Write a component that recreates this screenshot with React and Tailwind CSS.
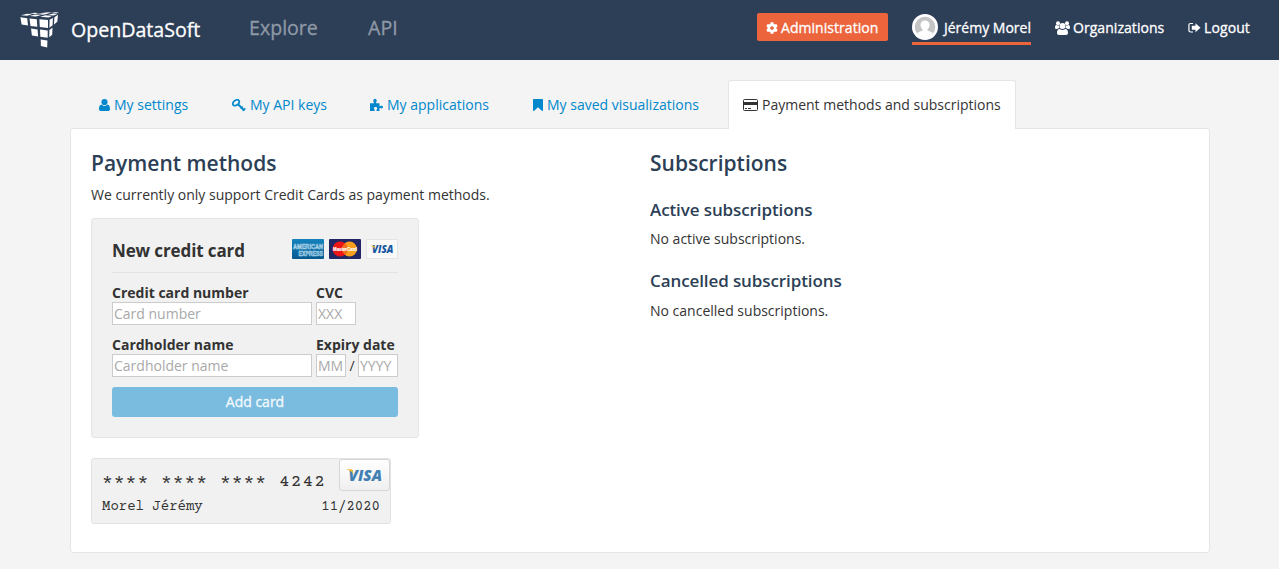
import React from "react";
import { FaCog } from "react-icons/fa";

function Logo() {
  return (
    <svg className="mt-3 h-9 w-10 shrink-0" viewBox="0 0 40 36" fill="#fff">
      <path d="M1 3.2 7 1.8l5 .5-5 1.5zM9.500 4l5.500-1.600 6 .6-5 1.600zM20 4.700l5.500-1.500 6.500.8-3.500 1.400zM9 1.600l6-.9 4 .5-4 .8zM17.500 2.100l6-1 4.500.6-5 1.100zM28 2.900l5-1.500 5 .3-4.500 1.900zM22 .900l6-.6 3.500.5-4 .6zM31 .9l4-.7h4l-2.500.9z" />
      <path d="M.4 5.300l6.800.9.8 7.200-6.400-1zM9.500 6.500l7.300.7.500 7.500-6.800-.8zM19.400 7.200l8.600.8v7.900l-8.200-.8z" />
      <path d="M29.600 7.800l3.300-1.700-.3 7.100-3.200 2.600zM34.400 5.300l3.600-2.600-.7 7.100-3.300 2.600z" />
      <path d="M11 16.600l6.600.8.500 7-6.200-1zM20 17.600l7.700.8v7.400l-7.400-1zM29.400 18l3.100-2.200-.3 6.900-3 2.600z" />
      <path d="M20.700 27.600l6.700.8-.2 7-6.300-1.300z" />
    </svg>
  );
}

function Avatar() {
  return (
    <svg className="h-[26px] w-[26px] shrink-0" viewBox="0 0 26 26">
      <circle cx="13" cy="13" r="13" fill="#fff" />
      <circle cx="13" cy="13" r="10.300" fill="#c4c4c4" />
      <path d="M13 6.500c3 0 4.500 2 4.500 4.400 0 2-.9 3.400-2 4.300v1.200l4.200 1.900c.7.400.9 1.200.9 1.800a10.300 10.300 0 0 1-15.200 0c0-.6.200-1.400.9-1.800l4.200-1.900v-1.200c-1.100-.9-2-2.300-2-4.300 0-2.400 1.500-4.400 4.500-4.400z" fill="#fff" />
    </svg>
  );
}

function GroupIcon() {
  return (
    <svg className="h-[14px] w-[15px]" viewBox="0 0 15 14" fill="currentColor">
      <circle cx="3" cy="2.200" r="2" />
      <circle cx="12" cy="2.200" r="2" />
      <circle cx="7.500" cy="5" r="3" />
      <path d="M4 5a3.500 3.500 0 0 0 .6 2c-1 0-1.800.4-2.300 1H1.500C.6 8 0 7.600 0 6.700 0 5.500.3 4 1.300 4c.3 0 .8.600 1.700.600.400 0 .7-.1 1-.2zM11 5a3.500 3.500 0 0 1-.6 2c1 0 1.800.4 2.300 1h.8c.9 0 1.500-.4 1.500-1.300C15 5.500 14.700 4 13.700 4c-.3 0-.8.600-1.700.600-.4 0-.7-.1-1-.2z" />
      <path d="M4.600 8c.5 0 1.300 1 2.900 1s2.400-1 2.900-1C12.300 8 13 10.200 13 12c0 1.200-.8 2-2 2H4c-1.200 0-2-.8-2-2 0-1.800.7-4 2.600-4z" />
    </svg>
  );
}

function LogoutIcon() {
  return (
    <svg className="h-3 w-[13px]" viewBox="0 0 13 12">
      <path d="M5 1.500H2.600C1.500 1.500.9 2.100.9 3.200v5.100c0 1.100.6 1.700 1.700 1.700H5" fill="none" stroke="currentColor" strokeWidth="1.200" />
      <path d="M7.500 1.300 12.500 5.800l-5 4.500V7.800H3.800v-4h3.700z" fill="currentColor" />
    </svg>
  );
}

function UserIcon() {
  return (
    <svg className="mr-1 h-3 w-[11px]" viewBox="0 0 11 12" fill="currentColor">
      <circle cx="5.500" cy="3.100" r="3.100" />
      <path d="M2.600 5.500C3.300 6.400 4.300 7 5.500 7s2.200-.6 2.900-1.500C10.300 5.600 11 7.700 11 9.700c0 1.400-.8 2.300-2 2.300H2c-1.200 0-2-.9-2-2.300 0-2 .7-4.100 2.600-4.200z" />
    </svg>
  );
}

function BookmarkIcon() {
  return (
    <svg className="mr-1 h-3 w-[10px]" viewBox="0 0 10 12" fill="currentColor">
      <path d="M.8 0h8.400c.5 0 .8.400.8.800v10.400c0 .7-.7 1-1.200.6L5 8.200l-3.800 3.600c-.5.400-1.200.1-1.200-.6V.8C0 .4.300 0 .8 0z" />
    </svg>
  );
}

function KeyIcon() {
  return (
    <svg className="h-[13px] w-[14px]" viewBox="0 0 14 13" fill="none" stroke="currentColor">
      <path d="M1 5.700C.4 4.400 1.300 2.800 2.700 1.700 4.200.7 6 .5 6.800 1.500s.4 2.700-1 3.900C4.300 6.800 1.900 7.200 1 5.700z" strokeWidth="1.700" />
      <path d="M5.800 5l6.500 6.500" strokeWidth="1.900" />
      <path d="M8.600 9.500l2-2M10.900 11.800l2.400-2.400" strokeWidth="1.600" />
    </svg>
  );
}

function PuzzleIcon() {
  return (
    <svg className="mb-0.5 h-[13px] w-[13px]" viewBox="0 0 13 13" fill="currentColor">
      <path d="M0 5.200h3.500c.6 0 .5-.5.200-1C2.900 3 3.200.7 5 .7s2.100 2.300 1.300 3.500c-.4.600-.2 1 .4 1h2.800v2.600c0 .6.500.6 1 .3 1-.7 2.500-.3 2.500 1s-1.500 1.700-2.500 1c-.5-.4-1-.2-1 .3V13H6.500v-1c0-.6.700-.9.700-1.800 0-.8-.7-1.300-1.600-1.300S4 9.400 4 10.200c0 .8.600 1.100.6 1.800v1H0z" />
    </svg>
  );
}

function CardIcon() {
  return (
    <svg className="h-3 w-[15px]" viewBox="0 0 15 12">
      <rect x=".5" y=".5" width="14" height="11" rx="1" fill="none" stroke="currentColor" />
      <path d="M1 3h13v3H1zM2 9h2v1H2zM5 9h3v1H5z" fill="currentColor" />
    </svg>
  );
}

function Amex() {
  return (
    <svg className="h-5 w-8" viewBox="0 0 32 20" overflow="visible">
      <defs>
        <linearGradient id="amex" x1="0" y1="0" x2="0" y2="1">
          <stop offset="0" stopColor="#1583bd" />
          <stop offset="1" stopColor="#04598f" />
        </linearGradient>
      </defs>
      <rect width="32" height="20" rx="1" fill="url(#amex)" />
      <g fill="#3288bb" stroke="#b5d9ec" strokeWidth=".55" fontFamily="Liberation Sans, sans-serif" fontWeight="bold" fontSize="6.500">
        <text x="1" y="9.500" textLength="30" lengthAdjust="spacingAndGlyphs">AMERICAN</text>
        <text x="6.500" y="16.500" textLength="24.500" lengthAdjust="spacingAndGlyphs">EXPRESS</text>
      </g>
    </svg>
  );
}

function MasterCard() {
  return (
    <svg className="h-5 w-8" viewBox="0 0 32 20" overflow="visible">
      <rect width="32" height="20" rx="1" fill="#202764" />
      <circle cx="20.500" cy="10" r="7.500" fill="#fa9f1c" />
      <circle cx="11" cy="10" r="7.500" fill="#ed1515" />
      <path d="M15.750 4.200a7.500 7.500 0 0 1 0 11.600 7.500 7.500 0 0 1 0-11.600z" fill="#f2701d" />
      <text x="4" y="12" fill="#fff" stroke="#fff" strokeWidth=".2" fontFamily="Liberation Sans, sans-serif" fontWeight="bold" fontSize="5.500" textLength="24" lengthAdjust="spacingAndGlyphs">MasterCard</text>
    </svg>
  );
}

function VisaMark({ className, color }) {
  return (
    <svg className={className} viewBox="0 0 36 14" overflow="visible">
      <text x="1.500" y="12.700" fill={color} fontFamily="Open Sans, sans-serif" fontStyle="italic" fontWeight="800" fontSize="16" textLength="33.500" lengthAdjust="spacingAndGlyphs">VISA</text>
      <path d="M-.5 1.200h4.600c1 0 1.500.5 1.700 1.500l.7 3.700C5.300 3.900 3 2.200-.5 1.500z" fill="#f5b92e" />
    </svg>
  );
}

const inputClass =
  "block h-[23px] border border-[#ccc] bg-white px-[1px] text-[14px] leading-[21px] text-[#333] outline-none placeholder:text-[#a9a9a9]";

const subheadingClass = "text-[17px] font-semibold leading-6 tracking-[-0.1px] text-[#2c3f56]";

function Tab({ className, icon, children }) {
  return (
    <a className={`flex h-12 shrink-0 items-center whitespace-nowrap text-[#0088cc] ${className}`}>
      {icon}
      <span>{children}</span>
    </a>
  );
}

export default function App() {
  return (
    <div className="h-[569px] w-[1279px] overflow-hidden bg-[#f4f4f4] font-['Open_Sans','Noto_Sans',sans-serif] text-[14px] leading-5 text-[#333]">
      <header className="flex h-[60px] items-start bg-[#2d3e57] pl-5 pr-[29px] text-white">
        <Logo />
        <span className="ml-[11px] mt-[15px] w-[178px] text-[19.600px] leading-[30px] [-webkit-text-stroke:0.3px]">OpenDataSoft</span>
        <nav className="mt-[13px] flex text-[19.600px] leading-[30px] text-[#8f99a6] [-webkit-text-stroke:0.3px]">
          <a className="w-[119px]">Explore</a>
          <a>API</a>
        </nav>
        <div className="ml-auto flex items-start [-webkit-text-stroke:0.3px]">
          <a className="mr-6 mt-[13px] flex h-7 w-[131px] items-center rounded-[2px] bg-[#ec643c] pb-px pl-[9px]">
            <FaCog className="mr-[3px] mt-0.5 h-3 w-3" />
            <span className="mt-0.5 tracking-[0.05px]">Administration</span>
          </a>
          <a className="mr-6 mt-3.5 flex h-[31px] w-[119px] items-start whitespace-nowrap border-b-[3px] border-[#ec643c]">
            <Avatar />
            <span className="ml-1.5 mt-1">Jérémy Morel</span>
          </a>
          <a className="mr-[23px] mt-[18px] flex w-[110px] whitespace-nowrap">
            <span className="mr-[3px] mt-[3px]"><GroupIcon /></span>
            <span className="tracking-[0.05px]">Organizations</span>
          </a>
          <a className="mt-[18px] flex w-[62px] whitespace-nowrap">
            <span className="mr-[3px] mt-1"><LogoutIcon /></span>
            <span className="tracking-[0.1px]">Logout</span>
          </a>
        </div>
      </header>

      <main className="ml-[70px] w-[1140px] pt-5">
        <nav className="relative z-10 -mb-px flex h-[49px]">
          <Tab className="w-[133px] pl-[29px] pt-0.5" icon={<UserIcon />}>My settings</Tab>
          <Tab className="w-[138px] pl-[29px] pt-0.5" icon={<span className="mr-1"><KeyIcon /></span>}>My API keys</Tab>
          <Tab className="w-[163px] pl-[29px] pt-0.5" icon={<span className="mr-1"><PuzzleIcon /></span>}>My applications</Tab>
          <Tab className="w-[224px] pl-[29px] pt-0.5" icon={<BookmarkIcon />}>My saved visualizations</Tab>
          <a className="flex h-[49px] w-[288px] shrink-0 items-center whitespace-nowrap rounded-t-[3px] border border-b-0 border-[#e5e5e5] bg-white pl-3.5">
            <span className="mr-1"><CardIcon /></span>
            <span>Payment methods and subscriptions</span>
          </a>
        </nav>
        <div className="flex h-[425px] rounded-[3px] border border-[#e5e5e5] bg-white pl-5 pt-[19px]">
          <section className="w-[559px]">
            <h2 className="text-[21px] font-semibold leading-[30px] text-[#2c3f56]">Payment methods</h2>
            <p className="mt-[7px]">We currently only support Credit Cards as payment methods.</p>
            <div className="mt-[13px] h-[220px] w-[328px] rounded-[3px] border border-[#e5e5e5] bg-[#f1f1f1] px-5 pt-5">
              <div className="flex h-[34px] items-start justify-between border-b border-[#e2e2e2]">
                <h3 className="text-[17px] font-bold leading-6 tracking-[-0.12px]">New credit card</h3>
                <div className="flex gap-[5px]">
                  <Amex />
                  <MasterCard />
                  <span className="flex h-5 w-8 items-center justify-center rounded-[1px] border border-[#e4e4e4] bg-[#f9f9f9]">
                    <VisaMark className="h-[9px] w-[23px]" color="#17579f" />
                  </span>
                </div>
              </div>
              <div className="mt-2.5 flex gap-1">
                <label className="w-[200px] font-bold">
                  <span className="block h-5">Credit card number</span>
                  <input className={`${inputClass} -mt-px w-[200px] font-normal`} placeholder="Card number" />
                </label>
                <label className="font-bold">
                  <span className="block h-5">CVC</span>
                  <input className={`${inputClass} -mt-px w-10 font-normal`} placeholder="XXX" />
                </label>
              </div>
              <div className="mt-2.5 flex gap-1">
                <label className="w-[200px] font-bold">
                  <span className="block h-5">Cardholder name</span>
                  <input className={`${inputClass} -mt-px w-[200px] font-normal`} placeholder="Cardholder name" />
                </label>
                <div>
                  <span className="block h-5 whitespace-nowrap font-bold">Expiry date</span>
                  <div className="-mt-px flex">
                    <input className={`${inputClass} w-[30px]`} placeholder="MM" />
                    <span className="w-3 text-center leading-[23px]">/</span>
                    <input className={`${inputClass} w-10`} placeholder="YYYY" />
                  </div>
                </div>
              </div>
              <button className="mt-2.5 block h-[30px] w-[286px] rounded-[3px] bg-[#7abcdf] text-[#f4fafd] [-webkit-text-stroke:0.3px]">Add card</button>
            </div>
            <div className="mt-5 flex h-[66px] w-[300px] flex-col rounded-[3px] border border-[#e2e2e2] bg-[#f1f1f1] font-['Courier_Prime','Liberation_Mono',monospace]">
              <div className="flex h-9 justify-between pl-2.5">
                <span className="mt-[13px] whitespace-pre text-[18px] leading-5 tracking-[1px]">**** **** **** 4242</span>
                <span className="flex h-8 w-[51px] items-center justify-center rounded-[3px] border border-[#d6d6d6] bg-gradient-to-b from-white to-[#f0f0f0]">
                  <VisaMark className="h-3.5 w-9" color="#427fb2" />
                </span>
              </div>
              <div className="flex justify-between pl-2.5 pr-2.5 pt-0.5 text-[14px]">
                <span>Morel Jérémy</span>
                <span>11/2020</span>
              </div>
            </div>
          </section>
          <section>
            <h2 className="text-[21px] font-semibold leading-[30px] text-[#2c3f56]">Subscriptions</h2>
            <h3 className={`mt-5 ${subheadingClass}`}>Active subscriptions</h3>
            <p className="mt-[7px]">No active subscriptions.</p>
            <h3 className={`mt-5 ${subheadingClass}`}>Cancelled subscriptions</h3>
            <p className="mt-2">No cancelled subscriptions.</p>
          </section>
        </div>
      </main>
    </div>
  );
}
